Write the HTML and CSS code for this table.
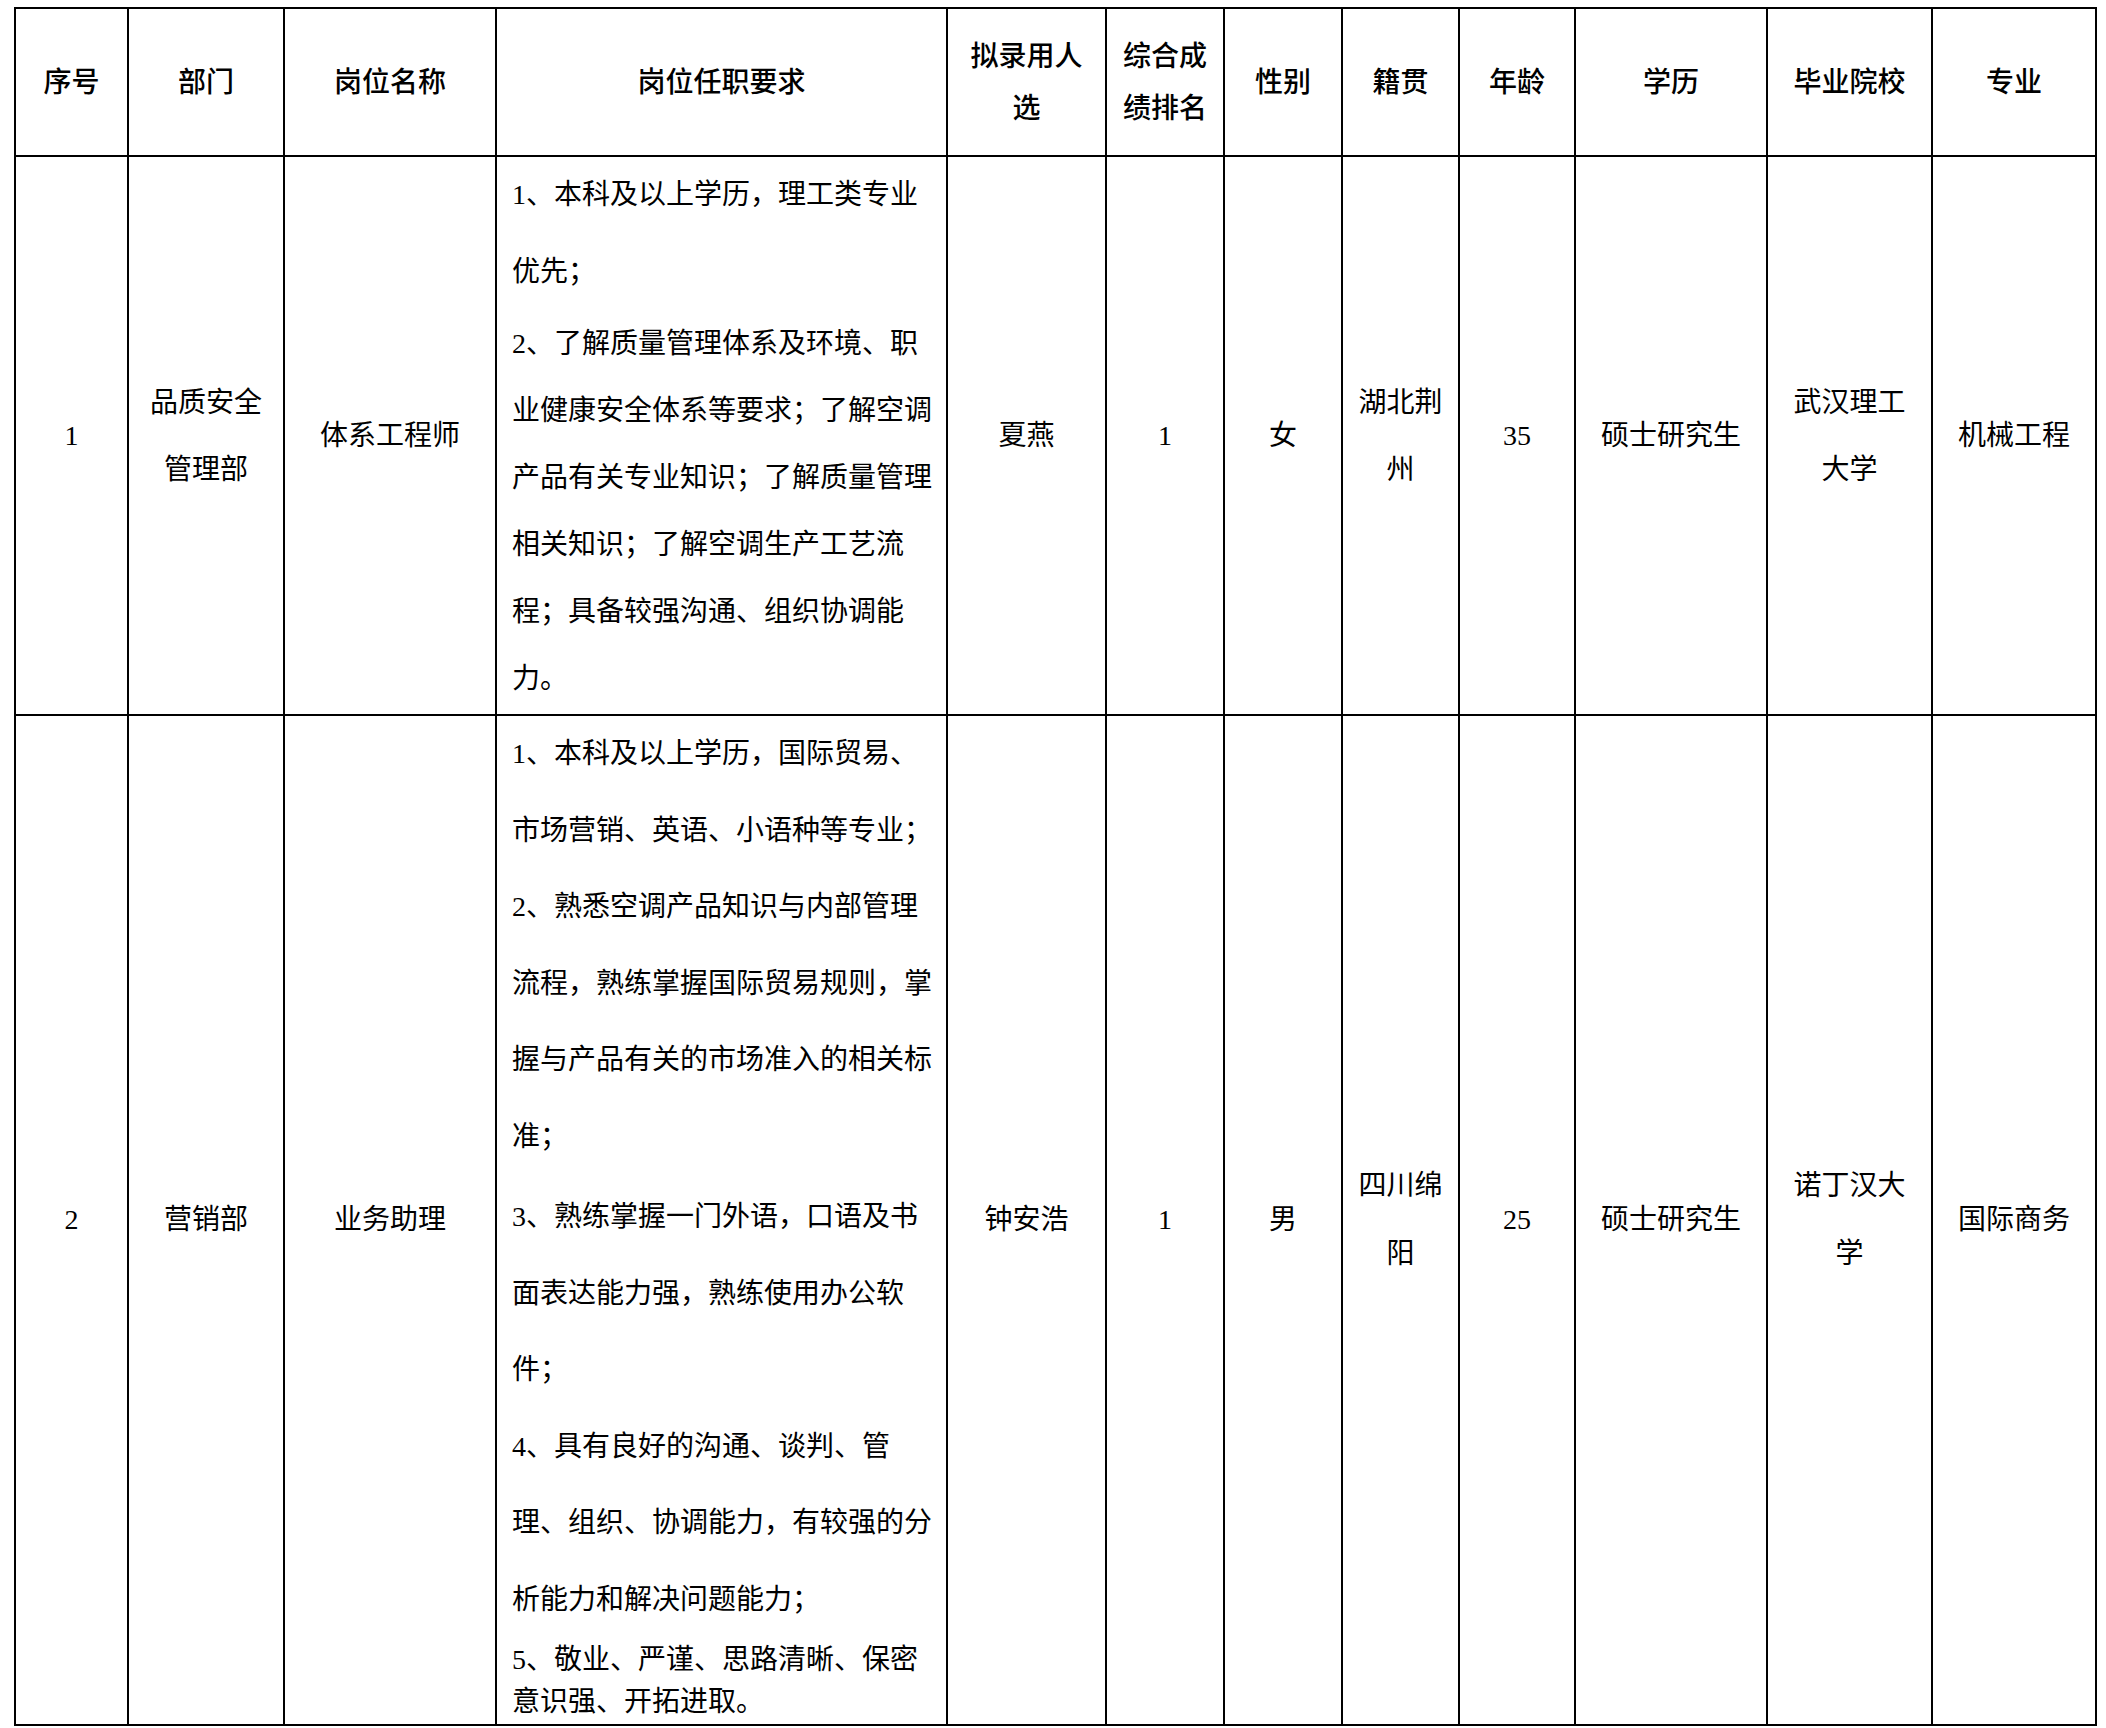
FILE: index.html
```html
<!DOCTYPE html>
<html lang="zh-CN">
<head>
<meta charset="utf-8">
<title>拟录用人员名单</title>
<link rel="stylesheet" href="styles.css">
</head>
<body>
<main class="page">
  <table class="roster">
    <colgroup>
      <col class="c-no">
      <col class="c-dept">
      <col class="c-post">
      <col class="c-req">
      <col class="c-name">
      <col class="c-rank">
      <col class="c-sex">
      <col class="c-home">
      <col class="c-age">
      <col class="c-edu">
      <col class="c-school">
      <col class="c-major">
    </colgroup>
    <thead>
      <tr class="head-row">
        <th>序号</th>
        <th>部门</th>
        <th>岗位名称</th>
        <th>岗位任职要求</th>
        <th>拟录用人<br>选</th>
        <th>综合成<br>绩排名</th>
        <th>性别</th>
        <th>籍贯</th>
        <th>年龄</th>
        <th>学历</th>
        <th>毕业院校</th>
        <th>专业</th>
      </tr>
    </thead>
    <tbody>
      <tr class="row-a">
        <td>1</td>
        <td>品质安全<br>管理部</td>
        <td>体系工程师</td>
        <td class="req">
          <p class="para loose">
            <span class="ln">1、本科及以上学历，理工类专业</span>
            <span class="ln">优先；</span>
          </p>
          <p class="para mid">
            <span class="ln">2、了解质量管理体系及环境、职</span>
            <span class="ln">业健康安全体系等要求；了解空调</span>
            <span class="ln">产品有关专业知识；了解质量管理</span>
            <span class="ln">相关知识；了解空调生产工艺流</span>
            <span class="ln">程；具备较强沟通、组织协调能</span>
            <span class="ln">力。</span>
          </p>
        </td>
        <td>夏燕</td>
        <td>1</td>
        <td>女</td>
        <td>湖北荆<br>州</td>
        <td>35</td>
        <td>硕士研究生</td>
        <td>武汉理工<br>大学</td>
        <td>机械工程</td>
      </tr>
      <tr class="row-b">
        <td>2</td>
        <td>营销部</td>
        <td>业务助理</td>
        <td class="req">
          <p class="para loose">
            <span class="ln">1、本科及以上学历，国际贸易、</span>
            <span class="ln">市场营销、英语、小语种等专业；</span>
          </p>
          <p class="para loose">
            <span class="ln">2、熟悉空调产品知识与内部管理</span>
            <span class="ln">流程，熟练掌握国际贸易规则，掌</span>
            <span class="ln">握与产品有关的市场准入的相关标</span>
            <span class="ln">准；</span>
          </p>
          <p class="para loose gap">
            <span class="ln">3、熟练掌握一门外语，口语及书</span>
            <span class="ln">面表达能力强，熟练使用办公软</span>
            <span class="ln">件；</span>
          </p>
          <p class="para loose">
            <span class="ln">4、具有良好的沟通、谈判、管</span>
            <span class="ln">理、组织、协调能力，有较强的分</span>
            <span class="ln">析能力和解决问题能力；</span>
          </p>
          <p class="para single">
            <span class="ln">5、敬业、严谨、思路清晰、保密</span>
            <span class="ln">意识强、开拓进取。</span>
          </p>
        </td>
        <td>钟安浩</td>
        <td>1</td>
        <td>男</td>
        <td>四川绵<br>阳</td>
        <td>25</td>
        <td>硕士研究生</td>
        <td>诺丁汉大<br>学</td>
        <td>国际商务</td>
      </tr>
    </tbody>
  </table>
</main>
</body>
</html>
```

FILE: styles.css
```css
html, body {
  margin: 0;
  padding: 0;
  background: #ffffff;
}

.page {
  padding: 7px 0 0 14px;
  font-family: "Liberation Serif", "Noto Sans CJK SC", serif;
  font-size: 28px;
  color: #000000;
}

.roster {
  border-collapse: collapse;
  table-layout: fixed;
  width: 2082px;
}

.c-no { width: 113px; }
.c-dept { width: 156px; }
.c-post { width: 212px; }
.c-req { width: 451px; }
.c-name { width: 159px; }
.c-rank { width: 118px; }
.c-sex { width: 118px; }
.c-home { width: 117px; }
.c-age { width: 116px; }
.c-edu { width: 192px; }
.c-school { width: 165px; }
.c-major { width: 164px; }

.roster th,
.roster td {
  border: 2px solid #000000;
  padding: 0 14px;
  text-align: center;
  vertical-align: middle;
  white-space: nowrap;
}

.roster th {
  font-weight: 500;
  line-height: 52px;
  padding-top: 2px;
}

.head-row { height: 148px; }
.row-a { height: 559px; }
.row-b { height: 1010px; }

.row-a td { line-height: 67px; }
.row-b td { line-height: 68px; }

.roster td.req {
  text-align: left;
  vertical-align: top;
  padding: 0 14px 0 15px;
}

.para {
  margin: 0;
}

.ln {
  display: block;
  white-space: nowrap;
}

.loose .ln {
  height: 76.5px;
  line-height: 76.5px;
}

.gap {
  margin-top: 4px;
}

.mid .ln {
  height: 67px;
  line-height: 67px;
}

.single {
  margin-top: 1px;
}

.single .ln {
  height: 42px;
  line-height: 42px;
}
```
